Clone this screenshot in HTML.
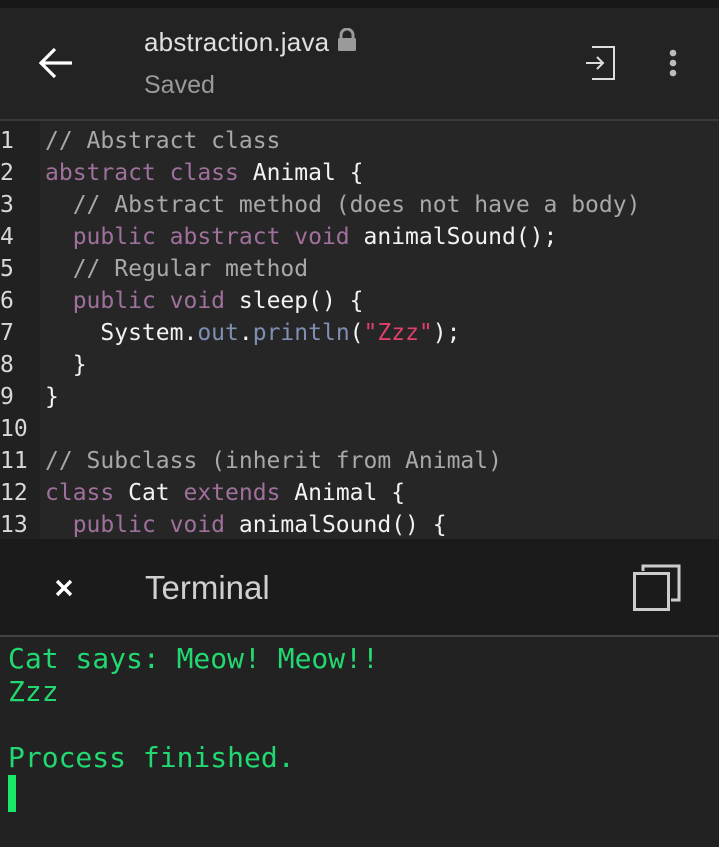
<!DOCTYPE html>
<html><head><meta charset="utf-8"><style>
*{margin:0;padding:0;box-sizing:border-box}
body{width:719px;height:847px;overflow:hidden;background:#222;font-family:"Liberation Sans",sans-serif;position:relative}
.top{position:absolute;left:0;top:0;width:719px;height:8px;background:#181818}
.hdr{position:absolute;left:0;top:8px;width:719px;height:111px;background:#232323}
.sep1{position:absolute;left:0;top:119px;width:719px;height:2px;background:#3a3a3a}
.title{position:absolute;left:144px;top:27px;font-size:26px;color:#e0e0e0;letter-spacing:0.2px}
.saved{position:absolute;left:144px;top:71px;font-size:25px;color:#9a9a9a}
.code{position:absolute;left:0;top:121px;width:719px;height:418px;background:#262626;overflow:hidden}
.gut{position:absolute;left:0;top:0;width:40px;height:418px;background:#212121}
.ln{position:absolute;left:0;font-family:"DejaVu Sans Mono",monospace;font-size:23px;color:#d8d8d8;white-space:pre;line-height:32px}
.src{position:absolute;left:45px;font-family:"DejaVu Sans Mono",monospace;font-size:23px;color:#f2f2f2;white-space:pre;line-height:32px}
.c{color:#a8a8a8}.k{color:#a0709c}.b{color:#7f8fb3}.s{color:#e0406a}
.th{position:absolute;left:0;top:539px;width:719px;height:96px;background:#1b1b1b}
.sep2{position:absolute;left:0;top:635px;width:719px;height:2px;background:#444}
.term{position:absolute;left:8px;top:642px;font-family:"DejaVu Sans Mono",monospace;font-size:28px;color:#22d870;white-space:pre;line-height:33px}
.cur{position:absolute;left:8px;top:775px;width:8px;height:37px;background:#18e868}
</style></head><body>
<div class="top"></div>
<div class="hdr"></div>
<svg style="position:absolute;left:38px;top:46px" width="36" height="34" viewBox="0 0 36 34"><path d="M34 17H4M17 3L3 17l14 14" stroke="#fff" stroke-width="3.2" fill="none"/></svg>
<div class="title">abstraction.java <svg width="20" height="24" viewBox="0 0 20 24" style="vertical-align:-1px"><path d="M4 11V7a6 6 0 0 1 12 0v4" stroke="#9a9a9a" stroke-width="3" fill="none"/><rect x="1" y="10" width="18" height="13" rx="1.5" fill="#9a9a9a"/></svg></div>
<div class="saved">Saved</div>
<svg style="position:absolute;left:584px;top:46px" width="32" height="34" viewBox="0 0 32 34"><path d="M8 1h22v32H8M2 17h17M13 11l6 6-6 6" stroke="#ddd" stroke-width="2" fill="none"/></svg>
<svg style="position:absolute;left:667px;top:49px" width="12" height="28"><circle cx="6" cy="4" r="3.3" fill="#bbb"/><circle cx="6" cy="14" r="3.3" fill="#bbb"/><circle cx="6" cy="24" r="3.3" fill="#bbb"/></svg>
<div class="sep1"></div>
<div class="code"><div class="gut"></div>
<div class="ln" style="top:4px">1
2
3
4
5
6
7
8
9
10
11
12
13</div>
<div class="src" style="top:4px"><span class="c">// Abstract class</span>
<span class="k">abstract class</span> Animal {
  <span class="c">// Abstract method (does not have a body)</span>
  <span class="k">public abstract void</span> animalSound();
  <span class="c">// Regular method</span>
  <span class="k">public void</span> sleep() {
    System.<span class="b">out</span>.<span class="b">println</span>(<span class="s">"Zzz"</span>);
  }
}

<span class="c">// Subclass (inherit from Animal)</span>
<span class="k">class</span> Cat <span class="k">extends</span> Animal {
  <span class="k">public void</span> animalSound() {</div>
</div>
<div class="th"></div>
<svg style="position:absolute;left:54px;top:578px" width="20" height="20" viewBox="0 0 20 20"><path d="M3 3l14 14M17 3L3 17" stroke="#fff" stroke-width="3.4"/></svg>
<div style="position:absolute;left:145px;top:569px;font-size:33px;color:#d0d0d0">Terminal</div>
<svg style="position:absolute;left:632px;top:563px" width="50" height="50" viewBox="0 0 50 50"><path d="M11 8V3h36v34h-8" stroke="#ccc" stroke-width="3" fill="none"/><rect x="2.5" y="10.5" width="34" height="36" stroke="#ccc" stroke-width="3" fill="none"/></svg>
<div class="sep2"></div>
<div class="term">Cat says: Meow! Meow!!
Zzz

Process finished.</div>
<div class="cur"></div>
</body></html>
